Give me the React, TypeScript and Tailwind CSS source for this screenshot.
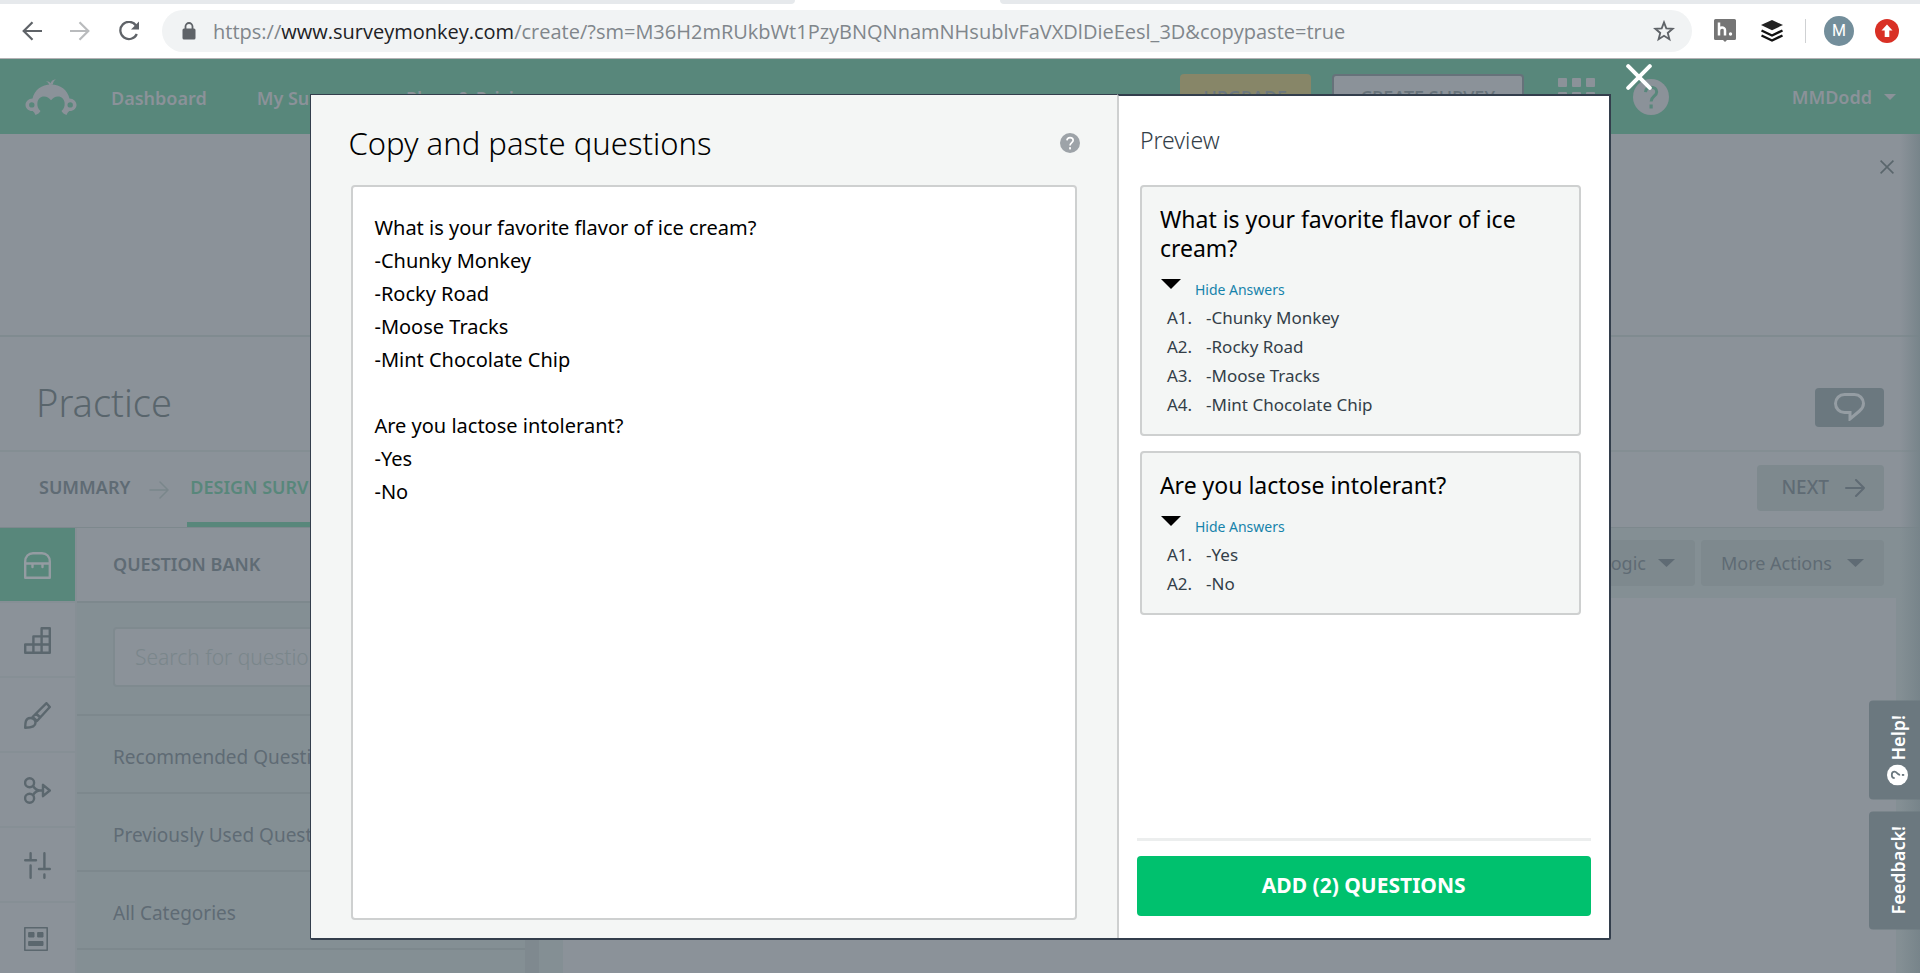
import React, { ReactNode } from "react";

const QUESTIONS = [
  {
    title: "What is your favorite flavor of ice cream?",
    answers: ["-Chunky Monkey", "-Rocky Road", "-Moose Tracks", "-Mint Chocolate Chip"],
  },
  { title: "Are you lactose intolerant?", answers: ["-Yes", "-No"] },
];

const PASTED = QUESTIONS.map((q) => [q.title, ...q.answers].join("\n")).join("\n\n");

function Caret({ className }: { className: string }) {
  return (
    <svg viewBox="0 0 20 10" preserveAspectRatio="none" className={className} fill="currentColor" aria-hidden="true">
      <path d="M0 0h20L10 10z" />
    </svg>
  );
}

function Arrow({ className, width = 2 }: { className: string; width?: number }) {
  return (
    <svg viewBox="0 0 20 18" className={className} fill="none" stroke="currentColor" strokeWidth={width} strokeLinecap="round" strokeLinejoin="round" aria-hidden="true">
      <path d="M1 9h18M11 1l8 8-8 8" />
    </svg>
  );
}

function QuestionMark({ className, mark }: { className: string; mark: string }) {
  return (
    <svg viewBox="0 0 36 36" className={className} aria-hidden="true">
      <circle cx="18" cy="18" r="18" fill="currentColor" />
      <path d="M12.500 13.200c.3-3.200 2.600-5 5.600-5 3.200 0 5.600 1.900 5.600 4.800 0 4.200-5.600 4.400-5.600 9.500" fill="none" stroke={mark} strokeWidth="3" />
      <rect x="16.500" y="25.500" width="3.200" height="4" fill={mark} />
    </svg>
  );
}

function BrowserBar() {
  return (
    <div className="shrink-0 font-['Open_Sans',sans-serif]">
      <div className="flex h-1 bg-white">
        <div className="w-[795px] rounded-br-lg bg-[#e6e9ec]" />
        <div className="w-[205px]" />
        <div className="flex-1 rounded-bl-lg bg-[#e6e9ec]" />
      </div>
      <div className="flex h-[55px] items-center border-b border-[#b3b1b4] bg-white pb-px pr-[21px] pl-[22px] text-[#5f6368]">
        <button aria-label="Back" className="mr-7">
          <svg viewBox="0 0 20 20" className="size-5" fill="none" stroke="currentColor" strokeWidth="2.200"><path d="M20 10H2.500M10.500 1.200L1.700 10l8.800 8.800" /></svg>
        </button>
        <button aria-label="Forward" className="mr-7 text-[#b9bbbd]">
          <svg viewBox="0 0 20 20" className="size-5" fill="none" stroke="currentColor" strokeWidth="2.200"><path d="M0 10h17.500M9.500 1.200l8.800 8.800-8.800 8.800" /></svg>
        </button>
        <button aria-label="Reload" className="mr-[22px]">
          <svg viewBox="0 0 22 20" className="h-5 w-[22px]" fill="none" stroke="currentColor" strokeWidth="2.300"><path d="M18 4.500A8.600 8.600 0 1 0 18.800 13" /><path d="M21 .5v8h-8z" fill="currentColor" stroke="none" /></svg>
        </button>
        <div className="flex h-[42px] flex-1 items-center rounded-full bg-[#f1f3f4] pr-[17px] pl-5">
          <svg viewBox="0 0 14 18" className="h-[18px] w-3.5 shrink-0" aria-hidden="true">
            <rect x="0.500" y="6.500" width="13" height="11" rx="1.500" fill="#5f6368" />
            <path d="M3.500 7V4.500a3.500 3.500 0 0 1 7 0V7" fill="none" stroke="#5f6368" strokeWidth="1.800" />
          </svg>
          <p className="ml-[17px] flex-1 truncate pt-0.5 text-[20px] leading-7 text-[#80868b]">
            https://<span className="text-[#202124]">www.surveymonkey.com</span>/create/?sm=M36H2mRUkbWt1PzyBNQNnamNHsublvFaVXDlDieEesl_3D&amp;copypaste=true
          </p>
          <button aria-label="Bookmark">
            <svg viewBox="0 0 24 24" className="size-[22px]" fill="none" stroke="currentColor" strokeWidth="2"><path d="M12 2.600l2.500 6.600 7 .4-5.400 4.500 1.800 6.900L12 17.200l-5.900 3.800 1.800-6.900L2.500 9.600l7-.4z" /></svg>
          </button>
        </div>
        <svg viewBox="0 0 22 23" className="ml-[22px] h-[23px] w-[22px]" role="img" aria-label="Notes extension">
          <path d="M1.500 0h19A1.500 1.500 0 0 1 22 1.500v18a1.500 1.500 0 0 1-1.500 1.500H13l-2 2-2-2H1.500A1.500 1.500 0 0 1 0 19.500v-18A1.500 1.500 0 0 1 1.500 0z" fill="#757575" />
          <path d="M5 3.500v13M5 11.500c0-4 6-4 6-.3v5.300" fill="none" stroke="#fff" strokeWidth="2.500" />
          <circle cx="16.500" cy="15" r="1.700" fill="#fff" />
        </svg>
        <svg viewBox="0 0 22 22" className="ml-[25px] size-[22px]" role="img" aria-label="Layers extension">
          <path d="M11 0l11 5-11 5.200L0 5z" fill="#222" />
          <path d="M.5 10.500l10.500 5 10.500-5M.5 15.500l10.500 5 10.500-5" fill="none" stroke="#111" strokeWidth="2.400" />
        </svg>
        <div className="ml-[22px] h-6 w-px bg-[#cfd1d3]" />
        <button className="ml-[18px] size-[30px] rounded-full bg-[#738e9b] font-[Roboto,sans-serif] text-base leading-[30px] text-white">M</button>
        <svg viewBox="0 0 24 24" className="ml-[21px] size-6" role="img" aria-label="Update available">
          <circle cx="12" cy="12" r="12" fill="#d93025" />
          <path d="M12 5.500l5.500 6H14.300v6.500H9.700v-6.500H6.500z" fill="#fff" />
        </svg>
      </div>
    </div>
  );
}

function Logo() {
  return (
    <svg viewBox="0 0 52 36" className="h-9 w-[52px]" fill="#8b9299" role="img" aria-label="SurveyMonkey">
      <path d="M24.200 6.200C23.800 4 22.600 3 20.800 2.300c2.400-.2 4 .6 4.700 2C26.200 2 28 .5 31 .2c-2 1.300-3 3-3.100 5.200z" />
      <path fillRule="evenodd" d="M7.500 19.500C9.500 11 16.500 5.500 26 5.500s16.500 5.500 18.500 14c4 .2 7 2.900 7 6.400s-3.200 6.300-7.200 6c-1 .8-2 2-2.800 4.100-2.300-.6-4-2.200-5-4 2.600-2.200 3.400-5 3.100-8-.4-4-3-6.500-6.600-6.500-3 0-5 1.500-7 3.700-2-2.200-4-3.700-7-3.700-3.600 0-6.200 2.500-6.600 6.500-.3 3 .5 5.800 3.100 8-1 1.800-2.700 3.400-5 4-.8-2.100-1.800-3.300-2.800-4.100-4 .3-7.200-2.500-7.200-6s3-6.200 7-6.400zM6.800 23.200a2.700 2.700 0 1 0 0 5.400 2.700 2.700 0 0 0 0-5.400zM45.200 23.200a2.700 2.700 0 1 0 0 5.400 2.700 2.700 0 0 0 0-5.400z" />
    </svg>
  );
}

function SiteHeader() {
  return (
    <header className="flex h-[75px] shrink-0 items-center bg-[#58877b] pr-6 pl-[25px] text-lg font-semibold text-[#8b9299]">
      <Logo />
      <nav className="ml-[34px] flex flex-1 gap-[50px] pt-0.5">
        <a href="#dashboard">Dashboard</a>
        <a href="#surveys">My Surveys</a>
        <a href="#plans">Plans &amp; Pricing</a>
      </nav>
      <button className="h-[46px] w-[131px] rounded bg-[#878668] font-medium text-[#6b777e]">UPGRADE</button>
      <button className="ml-[21px] h-[46px] w-48 rounded border-2 border-[#66727a] bg-[#8b9299] font-medium text-[#66727a]">CREATE SURVEY</button>
      <button aria-label="Apps" className="ml-[34px]">
        <svg viewBox="0 0 37 37" className="size-[37px]" fill="currentColor">
          {[0, 14, 28].map((y) => [0, 14, 28].map((x) => <rect key={`${x}-${y}`} x={x} y={y} width="9" height="9" rx="1" />))}
        </svg>
      </button>
      <button aria-label="Help" className="ml-[38px]">
        <QuestionMark className="size-9" mark="#58877b" />
      </button>
      <button className="ml-[123px] flex items-center gap-3">
        MMDodd
        <Caret className="h-1.5 w-3" />
      </button>
    </header>
  );
}

function SideButton({ label, active, children }: { label: string; active?: boolean; children: ReactNode }) {
  return (
    <button
      aria-label={label}
      className={
        active
          ? "flex h-[75px] shrink-0 items-center justify-center border-b-2 border-[#868f95] bg-[#58877b] pt-0.5 text-[#949ca2]"
          : "flex h-[75px] shrink-0 items-center justify-center border-b-2 border-[#868f95] pt-0.5 text-[#5b676e]"
      }
    >
      <svg viewBox="0 0 27 27" className="size-[27px]" fill="none" stroke="currentColor" strokeWidth="2.400" strokeLinejoin="round" strokeLinecap="round">
        {children}
      </svg>
    </button>
  );
}

function Sidebar() {
  return (
    <div className="flex w-[77px] shrink-0 flex-col border-r-2 border-[#868f95]">
      <SideButton label="Question bank" active>
        <path d="M1.200 25.800V9.500C1.200 4.500 4.500 1.200 9 1.200h9c4.500 0 7.800 3.300 7.800 8.300v16.300zM1.200 11.500h24.600M8.500 12v3M18.500 12v3" />
      </SideButton>
      <SideButton label="Builder">
        <path d="M1.200 17.500h24.600v8.300H1.200zM9.400 25.800V9.400h16.400M17.600 25.800V1.200h8.200v24.600" />
      </SideButton>
      <SideButton label="Themes">
        <path d="M22.500 1.200L25.800 5 13 19 8.500 15zM12 11.500l4.300 4M1.200 25.800c0-5 .3-9.800 5-9.800 3 0 5.300 2 5.300 4.800 0 4-4.300 5-10.300 5z" />
      </SideButton>
      <SideButton label="Logic">
        <circle cx="5.600" cy="5.800" r="4.500" />
        <circle cx="5.600" cy="21.200" r="4.500" />
        <path d="M9 9c2 3 4 4.500 7 4.500h3M9 18c2-3 4-4.500 7-4.500M19 7.800v11.400l6.800-5.700z" />
      </SideButton>
      <SideButton label="Options">
        <path d="M6.600 1.200v7M1.200 8.200H12M6.600 13.500v12.300M20.400 1.200v15.600M15 17h10.800M20.400 22.500v3.300" />
      </SideButton>
      <SideButton label="Format">
        <rect x="0.800" y="0.800" width="22.400" height="22.400" strokeWidth="1.600" />
        <path d="M5 5.500h5v4.500H5zM14 5.500h5v4.500h-5zM5 14.500h14v4H5z" fill="currentColor" strokeWidth="1" />
      </SideButton>
    </div>
  );
}

function QuestionBank() {
  return (
    <div className="flex w-[462px] shrink-0 flex-col bg-[#848f94] text-[#5f6b74]">
      <h2 className="flex h-[75px] items-center border-b-2 border-[#7d888d] bg-[#8b9299] pb-0.5 pl-9 text-lg font-semibold">QUESTION BANK</h2>
      <div className="flex flex-1">
        <div className="flex-1">
          <div className="h-[113px] border-b-2 border-[#7d888d] px-9 pt-6">
            <input
              aria-label="Search for questions"
              placeholder="Search for questions"
              className="h-[60px] w-full rounded border-2 border-[#7f8a8f] bg-[#8b9299] px-5 text-[21px] font-light placeholder:text-[#7a868b]"
            />
          </div>
          <ul className="text-[19px]">
            {["Recommended Questions", "Previously Used Questions", "All Categories"].map((t) => (
              <li key={t} className="flex h-[78px] items-center border-b-2 border-[#7d888d] pt-1.5 pl-9">
                <a href="#category">{t}</a>
              </li>
            ))}
          </ul>
        </div>
        <div className="w-3.5 bg-[#7f898f]" />
      </div>
    </div>
  );
}

function Canvas() {
  return (
    <div className="flex flex-1 flex-col bg-[#848f94] pr-6 pl-6">
      <div className="flex h-[70px] items-center justify-end gap-1.5 pr-3 text-lg text-[#5f6b74]">
        <button className="flex h-[46px] items-center gap-3 rounded bg-[#7e898e] px-5">
          Logic
          <Caret className="h-2 w-[17px]" />
        </button>
        <button className="flex h-[46px] items-center gap-[15px] rounded bg-[#7e898e] px-5">
          More Actions
          <Caret className="h-2 w-[17px]" />
        </button>
      </div>
      <div className="flex-1 bg-[#8b9299]" />
    </div>
  );
}

function SurveyPage() {
  return (
    <main className="relative flex min-h-0 flex-1 flex-col">
      <section className="flex h-[203px] shrink-0 justify-end border-b-2 border-[#808b90] pt-[26px] pr-[26px] text-[#5a666c]">
        <button aria-label="Dismiss banner" className="size-3.5">
          <svg viewBox="0 0 14 14" className="size-3.5" stroke="currentColor" strokeWidth="1.600"><path d="M.6.6l12.800 12.800M13.400.6L.6 13.400" /></svg>
        </button>
      </section>
      <section className="flex h-[115px] shrink-0 items-center justify-between border-b-2 border-[#848e93] px-9 pt-7">
        <h1 className="pb-3 text-[38px] leading-10 font-light text-[#59656c]">Practice</h1>
        <button aria-label="Comments" className="flex h-[39px] w-[69px] justify-center rounded-sm bg-[#6b787f] pt-[5px] text-[#959da3]">
          <svg viewBox="0 0 31 28" className="h-7 w-[31px]" fill="none" stroke="currentColor" strokeWidth="3"><path d="M10.500 1.500h10c5 0 9 4 9 9 0 3.500-1.700 5.500-4 7.500l-9.500 8v-6.500h-5.500c-5 0-9-4-9-9s4-9 9-9z" /></svg>
        </button>
      </section>
      <section className="flex h-[76px] shrink-0 items-center border-b border-[#7d888d] px-9 text-lg font-semibold text-[#5f6b74]">
        <a href="#summary" className="ml-[3px] pb-1.5">SUMMARY</a>
        <Arrow className="mr-[18px] ml-[19px] h-[18px] w-5 text-[#7a868b]" width={1.5} />
        <a href="#design" className="flex h-[75px] items-center border-b-[5px] border-[#58877b] px-[3px] pb-px text-[#58877b]">DESIGN SURVEY</a>
        <button className="mb-[3px] ml-auto flex h-[46px] items-center gap-4 rounded bg-[#7e898e] pr-[19px] pl-6 text-[19px] font-medium">
          NEXT
          <Arrow className="h-[18px] w-5" />
        </button>
      </section>
      <section className="flex min-h-0 flex-1 overflow-hidden">
        <Sidebar />
        <QuestionBank />
        <Canvas />
      </section>
      <div className="pointer-events-none absolute inset-y-0 right-0 w-5 bg-linear-to-r from-transparent to-[#77848a]" />
    </main>
  );
}

function PreviewCard({ title, answers }: { title: string; answers: string[] }) {
  return (
    <article className="mr-2.5 ml-[3px] rounded border-2 border-[#ced0d0] bg-[#f4f6f5] px-[18px] pt-[18px] pb-[15px]">
      <h4 className="text-[23px] leading-[29px] text-black">{title}</h4>
      <div className="flex h-10 items-center gap-3.5 pt-3.5">
        <Caret className="ml-px h-2.5 w-5 self-start mt-0.5" />
        <button className="text-sm text-[#1683ab]">Hide Answers</button>
      </div>
      <ul className="pl-[7px] text-[17px] leading-[29px] text-[#333e48]">
        {answers.map((a, i) => (
          <li key={a} className="flex gap-3.5">
            <span>A{i + 1}.</span>
            <span>{a}</span>
          </li>
        ))}
      </ul>
    </article>
  );
}

function Modal() {
  return (
    <div className="fixed inset-0 flex justify-center pt-[94px] pb-[33px] pl-px">
      <div role="dialog" aria-label="Copy and paste questions" className="relative flex w-[67.75%] rounded-b-xs border-b-2 border-l border-[#333e4c]">
        <section className="flex flex-1 flex-col border-t border-t-[#333e4c] bg-[#f4f6f5] pb-[18px]">
          <div className="flex h-[90px] items-center justify-between pt-1.5 pr-[37px] pl-[37px]">
            <h2 className="text-[31px] leading-10 font-light text-black">Copy and paste questions</h2>
            <button aria-label="About copy and paste" className="text-[#9da3a8]">
              <QuestionMark className="size-5" mark="#ffffff" />
            </button>
          </div>
          <textarea
            aria-label="Questions to add"
            defaultValue={PASTED}
            className="mx-10 flex-1 resize-none rounded-sm border-2 border-[#ced0d0] bg-white px-[21px] py-6 text-[20px] leading-[33px] text-black outline-none"
          />
        </section>
        <section className="flex w-[38%] flex-col border-t-2 border-r-2 border-l-2 border-t-[#333e4c] border-r-[#333e4c] border-l-[#ced0d0] bg-white px-[18px] pb-[22px]">
          <h3 className="flex h-[89px] items-center pl-[3px] text-[23px] font-light text-[#333e48]">Preview</h3>
          <div className="flex flex-1 flex-col gap-[15px]">
            {QUESTIONS.map((q) => (
              <PreviewCard key={q.title} title={q.title} answers={q.answers} />
            ))}
          </div>
          <div className="h-[3px] bg-[#eceeee]" />
          <button className="mt-[15px] h-[60px] rounded-sm bg-[#00c16e] text-[21px] font-bold text-white">ADD (2) QUESTIONS</button>
        </section>
        <button aria-label="Close" className="absolute -top-[30px] -right-[41px]">
          <svg viewBox="0 0 26 26" className="size-[26px]" stroke="#fff" strokeWidth="4" strokeLinecap="round"><path d="M2.200 2.200l21.600 21.600M23.800 2.200L2.200 23.800" /></svg>
        </button>
      </div>
    </div>
  );
}

function SideTabs() {
  return (
    <div className="fixed right-0 bottom-11 flex flex-col gap-[11px] text-lg font-semibold text-white">
      <button className="flex w-[51px] rotate-180 items-center justify-center gap-1 rounded-r bg-[#6b787f] pt-3.5 pr-[7px] pb-3.5 [writing-mode:vertical-rl]">
        <QuestionMark className="size-[21px] rotate-90" mark="#6b787f" />
        Help!
      </button>
      <button className="flex w-[51px] rotate-180 items-center justify-center rounded-r bg-[#6b787f] pt-[15px] pr-[7px] pb-[15px] [writing-mode:vertical-rl]">
        Feedback!
      </button>
    </div>
  );
}

export default function App() {
  return (
    <div className="flex h-screen flex-col overflow-hidden bg-[#8b9299] font-['Noto_Sans',sans-serif]">
      <BrowserBar />
      <SiteHeader />
      <SurveyPage />
      <Modal />
      <SideTabs />
    </div>
  );
}
